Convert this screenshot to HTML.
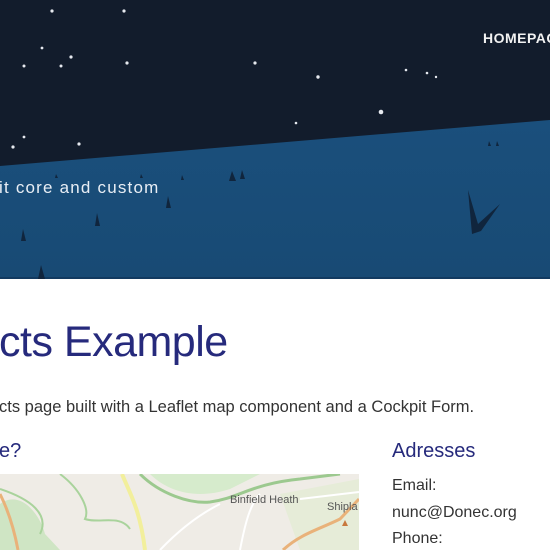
<!DOCTYPE html>
<html><head><style>
body{margin:0;width:550px;height:550px;overflow:hidden;background:#fff;font-family:"Liberation Sans",sans-serif;position:relative}
.hdr{position:absolute;left:0;top:0;width:550px;height:279px;overflow:hidden}
.t{position:absolute;white-space:nowrap}
</style></head><body>
<div class="hdr">
<svg width="550" height="279" viewBox="0 0 550 279">
<defs><linearGradient id="g" x1="0" y1="0" x2="0" y2="1"><stop offset="0" stop-color="#1a4f7c"/><stop offset="1" stop-color="#184a74"/></linearGradient></defs>
<rect width="550" height="279" fill="#121c2c"/>
<polygon points="0,166 550,120 550,279 0,279" fill="url(#g)"/>
<line x1="0" y1="278" x2="550" y2="278" stroke="#123a60" stroke-width="2"/>
<g fill="#e6e9ef">
<circle cx="52" cy="11" r="1.6"/><circle cx="124" cy="11" r="1.6"/><circle cx="42" cy="48" r="1.4"/><circle cx="71" cy="57" r="1.6"/><circle cx="24" cy="66" r="1.5"/><circle cx="61" cy="66" r="1.5"/><circle cx="127" cy="63" r="1.6"/><circle cx="255" cy="63" r="1.6"/><circle cx="318" cy="77" r="1.7"/><circle cx="406" cy="70" r="1.3"/><circle cx="427" cy="73" r="1.3"/><circle cx="436" cy="77" r="1.2"/><circle cx="381" cy="112" r="2.3"/><circle cx="296" cy="123" r="1.3"/><circle cx="24" cy="137" r="1.4"/><circle cx="13" cy="147" r="1.6"/><circle cx="79" cy="144" r="1.6"/>
</g>
<g fill="#10253d">
<polygon points="468,190 472,234 481,231 500,204 478,224"/>
<polygon points="229,181 232,171 236,181"/><polygon points="240,179 242,170 245,179"/>
<polygon points="166,208 168,196 171,208"/><polygon points="95,226 97,213 100,226"/>
<polygon points="21,241 23,229 26,241"/><polygon points="38,279 41,265 45,279"/>
<polygon points="181,180 182,175 184,180"/><polygon points="140,178 141,174 143,178"/>
<polygon points="55,178 56,174 58,178"/><polygon points="488,146 489,141 491,146"/><polygon points="496,146 497,141 499,146"/>
</g>
</svg>
<div class="t" style="left:483px;top:30px;color:#f2f2f2;font-size:14px;font-weight:bold;letter-spacing:0.5px">HOMEPAGE</div>
<div class="t" style="left:-1px;top:178px;color:#e8eef5;font-size:17px;letter-spacing:1.2px">it core and custom</div>
</div>
<div class="t" style="left:-1px;top:318px;color:#262a7c;font-size:43px;letter-spacing:-0.5px">cts Example</div>
<div class="t" style="left:-1px;top:398px;color:#333;font-size:16.5px">cts page built with a Leaflet map component and a Cockpit Form.</div>
<div class="t" style="left:-1px;top:440px;color:#262a7c;font-size:20px">e?</div>
<div class="t" style="left:392px;top:440px;color:#262a7c;font-size:20px">Adresses</div>
<div class="t" style="left:392px;top:477px;color:#333;font-size:16px">Email:</div>
<div class="t" style="left:392px;top:504px;color:#333;font-size:16px">nunc@Donec.org</div>
<div class="t" style="left:392px;top:530px;color:#333;font-size:16px">Phone:</div>
<svg style="position:absolute;left:0;top:474px" width="359" height="76" viewBox="0 0 359 76">
<rect width="359" height="76" fill="#efece6"/>
<path d="M0,30 C20,15 40,40 45,60 L60,76 L0,76Z" fill="#cfe5c4"/>
<path d="M150,0 C170,20 200,25 230,15 L260,0Z" fill="#d6ebcc"/>
<path d="M280,20 L359,5 L359,76 L300,76Z" fill="#e6ecd8"/>
<path d="M140,0 C160,20 190,30 210,28 C240,24 250,10 300,5 L340,0" stroke="#9cc98f" stroke-width="3" fill="none"/>
<path d="M0,15 C30,25 50,40 40,60 M60,0 C80,15 90,35 85,45 C100,50 120,40 130,55" stroke="#a9d39c" stroke-width="2" fill="none"/>
<path d="M122,0 C130,20 140,35 145,76" stroke="#f2ef9c" stroke-width="4" fill="none"/>
<path d="M0,20 C10,40 15,60 18,76" stroke="#e9b27a" stroke-width="3" fill="none"/>
<path d="M283,76 C300,60 320,55 340,45 L359,25" stroke="#e9b27a" stroke-width="3" fill="none"/>
<path d="M160,76 C180,55 200,40 220,30 M240,76 C245,50 250,30 260,20 M300,25 L359,18" stroke="#fff" stroke-width="2" fill="none"/>
<text x="230" y="29" font-size="11" fill="#555" font-family="Liberation Sans">Binfield Heath</text>
<text x="327" y="36" font-size="11" fill="#555" font-family="Liberation Sans">Shipla</text>
<polygon points="342,52 345,46 348,52" fill="#c8783e"/>
</svg>
</body></html>
